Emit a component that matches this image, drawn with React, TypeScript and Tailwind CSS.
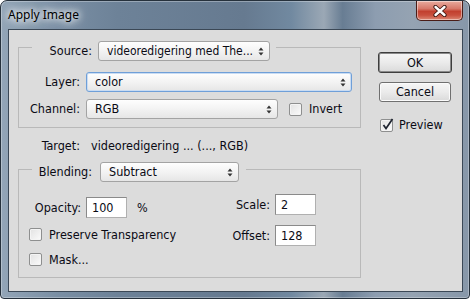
import React from "react";

function Arrows() {
  return (
    <svg width="6" height="9" viewBox="0 0 6 9" className="shrink-0">
      <path d="M0.5 3.5 L3 0.5 L5.5 3.5 Z M0.5 5.5 L3 8.5 L5.5 5.5 Z" fill="#333" />
    </svg>
  );
}

function Select({ className, text, focus }: { className: string; text: string; focus?: boolean }) {
  return (
    <div
      className={
        "h-[20px] flex items-center justify-between pl-[8px] pr-[5px] rounded-[3px] border bg-[linear-gradient(#fefefe,#f3f3f3_50%,#e6e6e6)] " +
        (focus ? "border-[#6f9fd8] shadow-[inset_0_0_0_1px_#c9dcf3]" : "border-[#a3a3a3]") +
        " " +
        className
      }
    >
      <span className="whitespace-nowrap leading-[16px]">{text}</span>
      <Arrows />
    </div>
  );
}

function Check({ className, checked }: { className?: string; checked?: boolean }) {
  return (
    <div
      className={
        "relative w-[13px] h-[13px] shrink-0 rounded-[2px] border border-[#8e8f8f] bg-[linear-gradient(135deg,#e2e2e2,#fbfbfb)] shadow-[inset_0_0_0_1px_#f4f4f4] " +
        (className ?? "")
      }
    >
      {checked && (
        <svg className="absolute left-[0px] top-[-3px] overflow-visible" width="13" height="14" viewBox="0 0 13 14">
          <path d="M2.5 8 L5 11.5 L11.5 2" fill="none" stroke="#1e2430" strokeWidth="1.7" />
        </svg>
      )}
    </div>
  );
}

function Input({ value, className }: { value: string; className?: string }) {
  return (
    <div
      className={
        "w-[41px] h-[21px] border border-[#8a8a8a] border-b-[#b0b0b0] border-r-[#b0b0b0] bg-white pl-[5px] flex items-center leading-[16px] " +
        (className ?? "")
      }
    >
      {value}
    </div>
  );
}

function CloseBtn() {
  return (
    <div className="mr-[6px] w-[47px] h-[20px] rounded-b-[5px] border border-t-0 border-[#4a1d17] bg-[linear-gradient(#e9ab9e,#d7796a_40%,#c2402f_55%,#c9503e_75%,#dc8a76)] shadow-[inset_0_0_0_1px_rgba(255,255,255,0.45)] flex items-center justify-center">
      <svg width="14" height="12" viewBox="0 0 14 12">
        <path d="M2.5 2 L11.5 10 M11.5 2 L2.5 10" stroke="#3a1510" strokeWidth="4.2" strokeLinecap="round" />
        <path d="M2.5 2 L11.5 10 M11.5 2 L2.5 10" stroke="#ffffff" strokeWidth="2.4" strokeLinecap="round" />
      </svg>
    </div>
  );
}

export default function App() {
  return (
    <div className="w-[470px] h-[299px] font-['DejaVu_Sans_Condensed','DejaVu_Sans',sans-serif] text-[12.5px] leading-[16px] text-[#0a0a14]">
      <div className="w-full h-full flex flex-col rounded-t-[7px] rounded-b-[4px] border border-[#26313c] bg-[linear-gradient(90deg,#93a5b7_0%,#7a8fa4_12%,#6d8298_25%,#667a90_52%,#7189a0_62%,#9ba8b5_69%,#687d93_73%,#8d9db0_80%,#95a3b2_88%,#8797a9_100%)] shadow-[inset_0_0_0_1px_rgba(255,255,255,0.3)]">
        <div className="h-[28px] flex justify-between shrink-0">
          <span className="pt-[6px] pl-[7px] font-['Noto_Sans',sans-serif] text-[12px] leading-[16px] text-black [text-shadow:0_0_6px_#fff,0_0_10px_#fff,0_0_14px_rgba(255,255,255,0.8)]">
            Apply Image
          </span>
          <CloseBtn />
        </div>
        <div className="flex-1 ml-[7px] mr-[6px] mb-[6px] border border-[#3b4856] bg-[#dcdcdc] flex">
          {/* left column */}
          <div className="pl-[9px] pt-[11px] flex flex-col">
            <div className="w-[343px] flex flex-col">
              <div className="flex h-[20px]">
                <div className="w-[14px] mt-[6px] border-t border-l border-[#b9b9b9]" />
                <div className="w-[66px] pr-[6px] text-right leading-[20px]">Source:</div>
                <Select className="w-[172px] text-[12px]" text="videoredigering med The..." />
                <div className="w-[6px]" />
                <div className="flex-1 mt-[6px] border-t border-r border-[#b9b9b9]" />
              </div>
              <div className="border-l border-r border-b border-[#b9b9b9] pt-[11px] pb-[8px] flex flex-col gap-[7px]">
                <div className="flex items-center h-[20px]">
                  <div className="w-[61px] text-right">Layer:</div>
                  <Select className="ml-[6px] w-[266px]" focus text="color" />
                </div>
                <div className="flex items-center h-[20px]">
                  <div className="w-[61px] text-right">Channel:</div>
                  <Select className="ml-[6px] w-[192px]" text="RGB" />
                  <Check className="ml-[11px]" />
                  <span className="ml-[7px]">Invert</span>
                </div>
              </div>
            </div>

            <div className="mt-[10px] h-[16px] flex">
              <div className="w-[62px] text-right">Target:</div>
              <div className="ml-[11px] whitespace-nowrap">videoredigering ... (..., RGB)</div>
            </div>

            <div className="mt-[8px] w-[343px] flex flex-col">
              <div className="flex h-[20px]">
                <div className="w-[14px] mt-[7px] border-t border-l border-[#b9b9b9]" />
                <div className="w-[68px] pr-[8px] text-right leading-[20px]">Blending:</div>
                <Select className="w-[139px]" text="Subtract" />
                <div className="w-[7px]" />
                <div className="flex-1 mt-[7px] border-t border-r border-[#b9b9b9]" />
              </div>
              <div className="border-l border-r border-b border-[#b9b9b9] flex">
                <div className="pl-[10px] pt-[15px] pb-[10px] flex flex-col">
                  <div className="h-[21px] flex items-center">
                    <div className="w-[52px] text-right">Opacity:</div>
                    <Input className="ml-[5px]" value="100" />
                    <span className="ml-[10px]">%</span>
                  </div>
                  <div className="mt-[9px] h-[15px] flex items-center">
                    <Check />
                    <span className="ml-[7px] whitespace-nowrap">Preserve Transparency</span>
                  </div>
                  <div className="mt-[10px] h-[15px] flex items-center">
                    <Check />
                    <span className="ml-[7px]">Mask...</span>
                  </div>
                </div>
                <div className="ml-auto pr-[44px] pt-[12px] flex flex-col gap-[10px]">
                  <div className="h-[21px] flex items-center">
                    <div className="w-[44px] text-right">Scale:</div>
                    <Input className="ml-[5px]" value="2" />
                  </div>
                  <div className="h-[21px] flex items-center">
                    <div className="w-[44px] text-right">Offset:</div>
                    <Input className="ml-[5px]" value="128" />
                  </div>
                </div>
              </div>
            </div>
          </div>

          {/* right column */}
          <div className="ml-[17px] pt-[22px] flex flex-col">
            <div className="w-[74px] h-[21px] rounded-[3px] border border-[#3e3e3e] shadow-[inset_0_0_0_1px_#8a8a8a] bg-[linear-gradient(#f6f6f6,#ebebeb_50%,#dadada)] flex items-center justify-center">
              OK
            </div>
            <div className="mt-[9px] ml-[1px] w-[72px] h-[20px] rounded-[3px] border border-[#707070] bg-[linear-gradient(#f6f6f6,#ebebeb_50%,#dadada)] shadow-[inset_0_0_0_1px_#fbfbfb] flex items-center justify-center">
              Cancel
            </div>
            <div className="mt-[16px] ml-[2px] h-[14px] flex items-center">
              <Check checked />
              <span className="ml-[6px]">Preview</span>
            </div>
          </div>
        </div>
      </div>
    </div>
  );
}
